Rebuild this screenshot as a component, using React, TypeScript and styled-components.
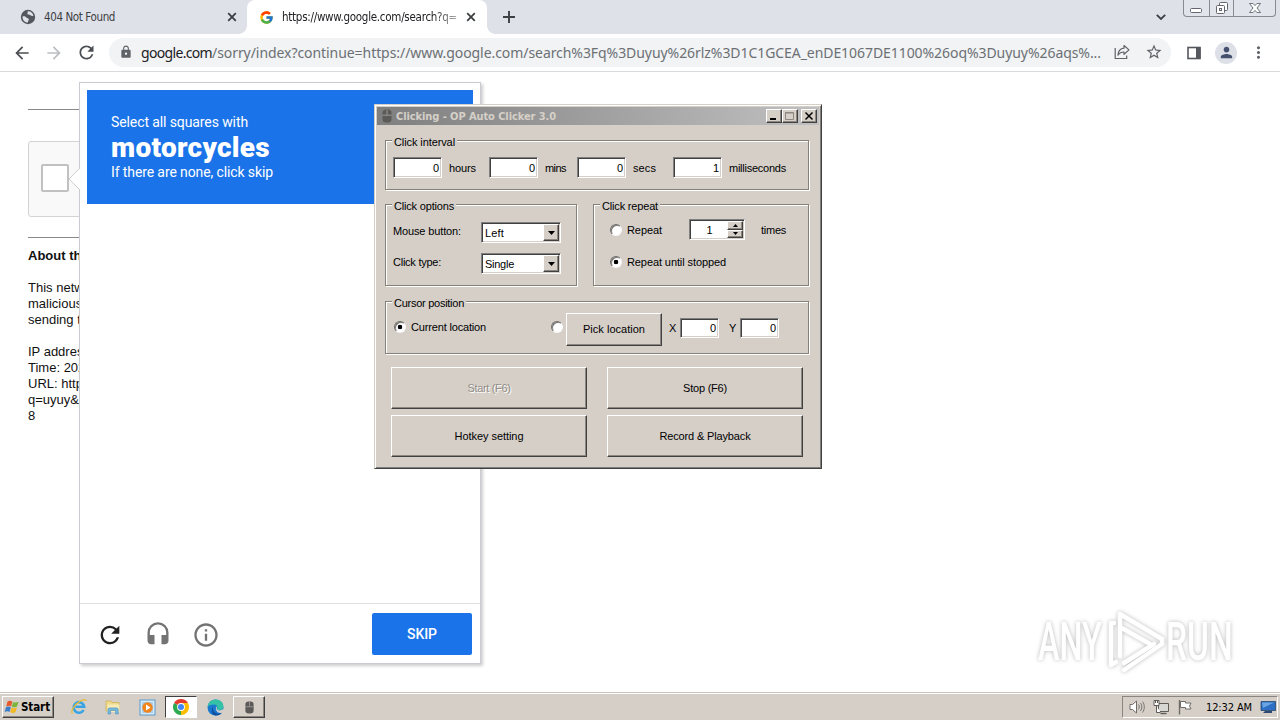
import React, { useLayoutEffect, useRef, useState } from 'react';
import styled, { createGlobalStyle, css } from 'styled-components';
import {
  MdArrowBack,
  MdArrowForward,
  MdHeadset,
  MdInfoOutline,
  MdLock,
  MdMoreVert,
  MdPerson,
  MdRefresh,
  MdStarBorder,
} from 'react-icons/md';
import { FcGoogle } from 'react-icons/fc';

const face = '#d5cfc8';
const tahoma = '"Noto Sans", "Open Sans", sans-serif';
const condensed = '"DejaVu Sans Condensed", "DejaVu Sans", sans-serif';
const sans = '"Liberation Sans", Arial, sans-serif';

const GlobalStyle = createGlobalStyle`
  * {
    box-sizing: border-box;
  }

  body {
    margin: 0;
    overflow: hidden;
    background: #fff;
    font-family: ${sans};
  }
`;

const Desktop = styled.div`
  position: relative;
  display: flex;
  flex-direction: column;
  width: 1280px;
  height: 720px;
  overflow: hidden;
`;

const FitText = styled.span`
  display: inline-block;
  flex: none;
  justify-self: start;
  white-space: nowrap;
`;

// Spreads the letters so that the text takes the given width in any font
const Fit: React.FC<{ width: number; children: string; className?: string }> = ({ width, children, className }) => {
  const ref = useRef<HTMLSpanElement>(null);
  const [spacing, setSpacing] = useState(0);

  useLayoutEffect(() => {
    if (!ref.current) return;
    const natural = ref.current.getBoundingClientRect().width;
    setSpacing((width - natural) / children.length);
  }, [width, children]);

  return (
    <FitText ref={ref} className={className} style={{ letterSpacing: spacing }}>
      {children}
    </FitText>
  );
};

/* ---------- browser ---------- */

const TabStrip = styled.div`
  display: flex;
  height: 34px;
  flex: none;
  background: #dee1e8;
  color: #3c4043;
  font: 11.5px/16px ${condensed};
`;

const Tab = styled.div<{ $active?: boolean }>`
  position: relative;
  display: flex;
  align-items: center;
  width: ${({ $active }) => ($active ? 240 : 247)}px;
  padding: ${({ $active }) => ($active ? '0 11px 0 12px' : '0 10px 0 20px')};
  border-radius: 8px 8px 0 0;
  background: ${({ $active }) => ($active ? '#fff' : 'transparent')};

  ${({ $active }) =>
    $active &&
    css`
      &::before,
      &::after {
        content: '';
        position: absolute;
        bottom: 0;
        width: 8px;
        height: 8px;
      }
      &::before {
        left: -8px;
        background: radial-gradient(circle at 0 0, transparent 7.5px, #fff 8px);
      }
      &::after {
        right: -8px;
        background: radial-gradient(circle at 100% 0, transparent 7.5px, #fff 8px);
      }
    `}
`;

const TabTitle = styled.div<{ $faded?: boolean }>`
  display: flex;
  margin-left: 8px;
  margin-right: auto;
  overflow: hidden;
  ${({ $faded }) =>
    $faded &&
    css`
      color: #202124;
      mask-image: linear-gradient(90deg, #000 86%, rgba(0, 0, 0, 0.35));
    `}
`;

const NewTab = styled.div`
  display: flex;
  align-items: center;
  padding-left: 16px;
`;

const StripEnd = styled.div`
  display: flex;
  margin-left: auto;
`;

const ChevronBox = styled.div`
  display: flex;
  align-items: center;
  margin-right: 16px;
`;

const Caption = styled.div`
  display: flex;
  width: 93px;
  height: 17px;
  margin-right: 4px;
  border: 1px solid #858b95;
  border-top: 0;
  border-radius: 0 0 4px 4px;
  background: #e1e4ea;
`;

const CaptionButton = styled.div<{ $width: number }>`
  display: flex;
  justify-content: center;
  width: ${({ $width }) => $width}px;

  & + & {
    border-left: 1px solid #858b95;
  }
`;

const Toolbar = styled.div`
  display: flex;
  align-items: center;
  height: 38px;
  flex: none;
  padding-left: 6px;
  border-bottom: 1px solid #d8dadd;
  background: #fff;
  color: #5f6368;
`;

const NavIcon = styled.div<{ $dim?: boolean }>`
  display: flex;
  justify-content: center;
  width: 32px;
  color: ${({ $dim }) => ($dim ? '#bcbec1' : '#4b4f53')};
`;

const Omnibox = styled.div`
  display: flex;
  align-items: center;
  width: 1062px;
  height: 29px;
  margin: 0 7px 1px;
  padding-left: 10px;
  border-radius: 15px;
  background: #f1f3f4;
  font: 14px/20px ${tahoma};
`;

const Address = styled.div`
  display: flex;
  width: 965px;
  margin-left: 8px;
  padding-top: 1px;
  color: #6c7074;
`;

const Host = styled(Fit)`
  color: #202124;
`;

const ToolIcon = styled.div`
  display: flex;
  align-items: center;
  justify-content: center;
  width: 32px;
`;

const Avatar = styled.div`
  display: flex;
  align-items: center;
  justify-content: center;
  width: 22px;
  height: 22px;
  border-radius: 50%;
  background: #dde0e6;
  color: #44516f;
`;

/* ---------- page ---------- */

const Page = styled.main`
  position: relative;
  flex: 1;
  padding: 37px 0 0 28px;
  background: #fff;
`;

const Rule = styled.div`
  width: 400px;
  height: 1px;
  background: #8a8a8a;
`;

const CheckCard = styled.div`
  display: flex;
  align-items: center;
  width: 302px;
  height: 76px;
  margin: 31px 0 20px;
  padding: 0 0 2px 12px;
  border: 1px solid #d3d3d3;
  border-radius: 3px;
  background: #f9f9f9;
`;

const CheckSquare = styled.div`
  width: 28px;
  height: 28px;
  border: 2px solid #c1c1c1;
  border-radius: 2px;
  background: #fff;
`;

const Notice = styled.div`
  margin-top: 10px;
  width: 60px;
  color: #111;
  font-size: 13px;
  line-height: 16px;
  white-space: pre;
`;

const Challenge = styled.section`
  position: absolute;
  left: 79px;
  top: 10px;
  display: flex;
  flex-direction: column;
  width: 402px;
  height: 582px;
  border: 1px solid #c9ccd0;
  background: #fff;
  box-shadow: 2px 2px 3px rgba(0, 0, 0, 0.2);
  font-family: Roboto, sans-serif;
`;

const Pointer = styled.svg`
  position: absolute;
  left: -12px;
  top: 84px;
`;

const ChallengeHead = styled.div`
  height: 114px;
  margin: 7px;
  padding: 22px 24px;
  background: #1a73e8;
  color: #fff;
  font-size: 14px;
  line-height: 20px;
`;

const Subject = styled.div`
  height: 30px;
  font-size: 28px;
  font-weight: 900;
  line-height: 32px;
`;

const ChallengeFoot = styled.div`
  display: flex;
  align-items: center;
  height: 60px;
  margin-top: auto;
  padding: 0 8px 0 16px;
  border-top: 1px solid #dfdfdf;
`;

const FootIcon = styled.div<{ $dark?: boolean }>`
  display: flex;
  align-items: center;
  justify-content: center;
  width: 28px;
  height: 32px;
  margin-right: 20px;
  padding-top: 2px;
  color: ${({ $dark }) => ($dark ? '#222' : '#737373')};
`;

const Skip = styled.button`
  width: 100px;
  height: 42px;
  margin-left: auto;
  padding: 0;
  border: 0;
  border-radius: 2px;
  background: #1a73e8;
  color: #fff;
  font: 500 14px Roboto, sans-serif;
`;

const WatermarkLogo = styled.svg`
  position: absolute;
  left: 1030px;
  top: 603px;
  filter: drop-shadow(0 0 2px rgba(0, 0, 0, 0.28));
`;

/* ---------- auto clicker ---------- */

const raised = css`
  border: 1px solid;
  border-color: #fff #404040 #404040 #fff;
  box-shadow: inset -1px -1px 0 #8b8680;
`;

const sunken = css`
  border: 1px solid;
  border-color: #808080 #fff #fff #808080;
  box-shadow: inset 1px 1px 0 #404040, inset -1px -1px 0 ${face};
`;

const Dialog = styled.section`
  position: absolute;
  left: 374px;
  top: 104px;
  width: 448px;
  height: 365px;
  padding: 1px;
  border: 1px solid;
  border-color: ${face} #404040 #404040 ${face};
  box-shadow: inset 1px 1px 0 #fff, inset -1px -1px 0 #808080;
  background: ${face};
  color: #000;
  font: 11px/14px ${sans};
`;

const TitleBar = styled.div`
  display: flex;
  align-items: center;
  height: 18px;
  margin: 1px 1px 0;
  padding: 0 2px 0 4px;
  background: linear-gradient(90deg, #7f7f7f, #c0c0c0);
  color: #d5d0c8;
  font: bold 11px/18px ${condensed};
`;

const TitleText = styled(Fit)`
  margin: 1px auto 0 3px;
`;

const TitleButton = styled.div<{ $gap?: boolean }>`
  display: flex;
  align-items: center;
  justify-content: center;
  width: 16px;
  height: 14px;
  margin-left: ${({ $gap }) => ($gap ? 3 : 0)}px;
  background: ${face};
  ${raised}
`;

const GroupRow = styled.div<{ $top: number }>`
  display: flex;
  justify-content: space-between;
  width: 424px;
  margin: ${({ $top }) => $top}px 0 0 9px;
`;

const Group = styled.div<{ $width: number; $height: number }>`
  width: ${({ $width }) => $width}px;
  height: ${({ $height }) => $height}px;
  border: 1px solid #858078;
  box-shadow: 1px 1px 0 #fff, inset 1px 1px 0 #fff;
`;

const Legend = styled.div`
  width: fit-content;
  height: 14px;
  margin: -6px 0 -1px 6px;
  padding: 0 2px;
  background: ${face};
`;

const IntervalRow = styled.div`
  display: grid;
  grid-template-columns: 56px 40px 56px 32px 56px 40px 56px 60px;
  align-items: center;
  margin: 9px 0 0 7px;
`;

const Field = styled.div<{ $width: number; $height: number }>`
  display: flex;
  align-items: center;
  justify-content: flex-end;
  width: ${({ $width }) => $width}px;
  height: ${({ $height }) => $height}px;
  padding-right: 2px;
  background: #fff;
  ${sunken}
`;

const OptionRow = styled.div`
  display: grid;
  grid-template-columns: 88px 80px;
  height: 21px;
  margin: 10px 0 0 7px;
`;

const OptionLabel = styled(Fit)<{ $low?: boolean }>`
  padding-top: 2px;
`;

const Select = styled.div`
  display: flex;
  align-items: center;
  justify-content: space-between;
  height: 21px;
  padding: 2px 1px 2px 3px;
  background: #fff;
  ${sunken}
`;

const DropButton = styled.div`
  display: flex;
  align-items: center;
  justify-content: center;
  width: 16px;
  height: 17px;
  background: ${face};
  ${raised}
`;

const RepeatRow = styled.div<{ $top: number }>`
  display: flex;
  align-items: center;
  height: 21px;
  margin: ${({ $top }) => $top}px 0 0 16px;
`;

const Radio = styled.div<{ $checked?: boolean }>`
  width: 12px;
  height: 12px;
  flex: none;
  border: 1px solid;
  border-color: #706c68 #f8f8f8 #f8f8f8 #706c68;
  border-radius: 50%;
  background: ${({ $checked }) => ($checked ? 'radial-gradient(circle, #000 2px, #fff 2.6px)' : '#fff')};
  box-shadow: inset 1px 1px 0 #777;
`;

const RadioLabel = styled(Fit)`
  margin-left: 5px;
`;

const Spinner = styled.div`
  display: flex;
  width: 56px;
  height: 21px;
  margin: 0 16px 0 auto;
  background: #fff;
  padding: 1px 1px 1px 0;
  ${sunken}
`;

const SpinnerValue = styled.div`
  flex: 1;
  padding: 2px 0 0 2px;
  text-align: center;
`;

const SpinButtons = styled.div`
  display: grid;
  grid-template-rows: 1fr 1fr;
  width: 16px;
`;

const SpinButton = styled.div`
  display: flex;
  align-items: center;
  justify-content: center;
  background: ${face};
  ${raised}
`;

const TimesLabel = styled(Fit)`
  margin-right: 22px;
`;

const CursorRow = styled.div`
  display: flex;
  align-items: flex-start;
  margin: 4px 0 0 8px;
`;

const CursorCell = styled.div<{ $width: number; $top: number }>`
  display: flex;
  align-items: center;
  flex: none;
  width: ${({ $width }) => $width}px;
  padding-top: ${({ $top }) => $top}px;
`;

const AxisCell = styled.div`
  display: flex;
  align-items: center;
  gap: 2px;
  margin: 5px 0 0 7px;

  & + & {
    margin-left: 10px;
  }
`;

const PushButton = styled.button<{ $disabled?: boolean }>`
  display: flex;
  align-items: center;
  justify-content: center;
  width: 100%;
  height: 100%;
  padding: 0 0 1px;
  background: ${face};
  color: ${({ $disabled }) => ($disabled ? '#928d87' : '#000')};
  text-shadow: ${({ $disabled }) => ($disabled ? '1px 1px 0 #fff' : 'none')};
  font: 11px/14px ${sans};
  ${raised}
`;

const PickCell = styled.div`
  width: 96px;
  height: 33px;
  flex: none;
`;

const Actions = styled.div`
  display: grid;
  grid-template-columns: 196px 196px;
  grid-auto-rows: 42px;
  gap: 6px 20px;
  margin: 13px 0 0 15px;
`;

/* ---------- taskbar ---------- */

const Taskbar = styled.footer`
  display: flex;
  align-items: center;
  height: 28px;
  flex: none;
  padding: 1px 2px 0;
  border-top: 1px solid #c9c5bd;
  box-shadow: inset 0 1px 0 #fff;
  background: ${face};
`;

const StartButton = styled.div`
  display: flex;
  align-items: center;
  gap: 0;
  width: 52px;
  height: 22px;
  margin-right: 9px;
  padding-left: 1px;
  color: #000;
  font: bold 11.5px ${condensed};
  ${raised}
`;

const TaskItem = styled.div<{ $state?: 'pressed' | 'raised' }>`
  display: flex;
  align-items: center;
  justify-content: center;
  width: 32px;
  height: 22px;
  margin-right: 2px;
  ${({ $state }) => $state === 'raised' && raised}
  ${({ $state }) =>
    $state === 'pressed' &&
    css`
      border: 1px solid;
      border-color: #404040 #fff #fff #404040;
      background: #fff;
    `}
`;

const Tray = styled.div`
  display: flex;
  align-items: center;
  gap: 8px;
  width: 156px;
  height: 22px;
  margin-left: auto;
  padding-left: 6px;
  border: 1px solid;
  border-color: #8a857e #fff #fff #8a857e;
  color: #000;
  font: 11px/14px ${condensed};
`;

const Clock = styled(Fit)`
  margin-left: 5px;
  padding-top: 1px;
`;

/* ---------- icons ---------- */

const Cross = () => (
  <svg width="10" height="10" viewBox="0 0 10 10">
    <path d="M1.2 1.2l7.6 7.6M8.8 1.2L1.2 8.8" stroke="#3c4043" strokeWidth="1.8" />
  </svg>
);

const Globe = () => (
  <svg width="16" height="16" viewBox="0 0 16 16">
    <circle cx="8" cy="8" r="7.2" fill="#54585d" />
    <path d="M2.6 7.4c1.8-.4 3 .2 3.8 1.2.6.8 2.2.4 2.4 1.6.2 1-.8 1.2-1 3.4C4.6 13.4 2.2 10.6 2.6 7.4z" fill="#dee1e8" />
    <path d="M7.6 2.4c2.8-.4 5 1.4 5.8 4-.8 1-2.2.4-3-.2-1-.8-2.4-.2-3-1.2-.4-.8.8-1.4.2-2.6z" fill="#dee1e8" />
  </svg>
);

const MouseGlyph = ({ size = 14 }: { size?: number }) => (
  <svg width={size - 2} height={size} viewBox="0 0 12 14">
    <rect x="1.5" y="0.5" width="9" height="13" rx="3.5" fill="#5c5a58" />
    <path d="M6 1v5M1.5 6.2h9" stroke="#9b9894" />
  </svg>
);

const DropArrow = () => (
  <svg width="7" height="4" viewBox="0 0 7 4">
    <path d="M0 0h7L3.5 4z" fill="#000" />
  </svg>
);

const WindowsFlag = () => (
  <svg width="17" height="16" viewBox="0 0 16 16">
    <path d="M3 2.6c1.7-1.1 3.2-1 4.8-.1L6.6 7.4c-1.5-.9-3-1-4.900 0z" fill="#e5592b" />
    <path d="M8.5 2.9c1.7.9 3.6.8 5.6-.2l-1.5 4.900c-1.600.9-3.200 1-5.200.1z" fill="#7cb53c" />
    <path d="M1.5 8.200c1.600-1 3.100-.9 4.900 0L5 13c-1.500-.9-3-.9-4.900.1z" fill="#3d7ec9" />
    <path d="M7.1 8.600c1.700.8 3.500.8 5.300-.1L11 13.200c-1.700 1-3.300.9-5.200 0z" fill="#f4b824" />
  </svg>
);

const ExplorerE = () => (
  <svg width="18" height="18" viewBox="0 0 18 18" fill="none">
    <path d="M13.6 12a5.3 5.3 0 1 1 .6-3.2H5.4" stroke="#36a3e2" strokeWidth="2.6" />
    <path d="M2.5 15.6C.2 13.2 4.6 6.6 9.4 3.6c3.2-2 6.4-2.6 6.6-.6" stroke="#e6bb3a" strokeWidth="1.3" />
  </svg>
);

const FolderIcon = () => (
  <svg width="18" height="18" viewBox="0 0 18 18">
    <path d="M2 3h5l1 1.5h7V13H2z" fill="#f0d98a" stroke="#cbb25c" strokeWidth=".8" />
    <path d="M3.5 6.5h12V14h-12z" fill="#f8ebb4" />
    <path d="M4 16v-4.5c0-1 .6-1.6 1.6-1.6h7c1 0 1.6.6 1.6 1.6V16h-2.600v-3.500h-5V16z" fill="#75b8dd" stroke="#4b94bd" strokeWidth=".6" />
  </svg>
);

const PlayerIcon = () => (
  <svg width="17" height="17" viewBox="0 0 17 17">
    <rect x="1" y="1" width="15" height="15" fill="#d7e9f6" stroke="#5a9bcb" />
    <rect x="3" y="3" width="11" height="11" fill="#a9cfe9" />
    <circle cx="8.5" cy="8.5" r="5.2" fill="#f0851d" />
    <path d="M7 5.6v5.8l4.6-2.900z" fill="#fff" />
  </svg>
);

const ChromeIcon = () => (
  <svg width="16" height="16" viewBox="0 0 16 16">
    <path d="M8 8L1.07 4A8 8 0 0 1 14.93 4z" fill="#e33b2e" />
    <path d="M8 8V16A8 8 0 0 1 1.07 4z" fill="#2da94f" />
    <path d="M8 8L14.93 4A8 8 0 0 1 8 16z" fill="#fdbd00" />
    <path d="M8 4h6.93L11.5 10z" fill="#fdbd00" />
    <circle cx="8" cy="8" r="3.9" fill="#fff" />
    <circle cx="8" cy="8" r="3" fill="#4285f4" />
  </svg>
);

const EdgeIcon = () => (
  <svg width="17" height="17" viewBox="0 0 17 17">
    <circle cx="8.5" cy="8.5" r="8" fill="#1a78cf" />
    <path d="M.6 8C1 3.6 4.4.6 8.6.6c4.6 0 7.8 3.2 7.8 6.8 0 2.4-1.8 3.8-4 3.8-1.8 0-2.8-.8-2.2-1.800C11 7.600 9.400 5.400 6.600 5.400 3.800 5.400 1.400 6.600.6 8z" fill="#35c1a6" />
    <path d="M6.2 8c-1 3 1.2 6.6 5 6.8 1.6.1 3-.5 3.9-1.2-1.3 2.2-3.8 3.1-6.5 2.900C4.400 15.900 3.600 10.200 6.200 8z" fill="#0d4f9e" />
    <path d="M9.6 7.6c1 1.2-.6 2 .4 3 1.4 1.3 4.2 1 6.4-.6l.6 2.4c-1.4 1.2-3 1.8-5 1.4-2.4-.4-4.2-4.2-2.4-6.2z" fill="#d5cfc8" />
  </svg>
);

const Watermark = () => (
  <WatermarkLogo width="245" height="76" viewBox="0 0 245 76">
    <g fill="#fff" fontFamily="Roboto, sans-serif" fontSize="54" fontWeight="500">
      <text transform="translate(8 57) scale(.6 1)">ANY</text>
      <text transform="translate(136 57) scale(.62 1)">RUN</text>
    </g>
    <g fill="none" stroke="#fff" strokeWidth="4.5" strokeLinejoin="round" strokeLinecap="round">
      <path d="M90 53V11l42 25M90 53V24l30 17" />
      <path d="M84 20h-3v42l5-3" />
      <path d="M94 67l38-26v-5" />
      <path d="M94 60l30-19" />
    </g>
  </WatermarkLogo>
);

const SpeakerIcon = () => (
  <svg width="16" height="16" viewBox="0 0 16 16" fill="none" stroke="#6f6c68">
    <path d="M1 5.5h2.5L7.5 2v12L3.5 10.5H1z" fill="#fff" />
    <path d="M9.5 5.5c1 1.4 1 3.6 0 5M11.5 4c1.8 2.2 1.8 5.8 0 8M13.5 2.500c2.400 3 2.400 8 0 11" strokeWidth=".9" />
  </svg>
);

const NetworkIcon = () => (
  <svg width="16" height="16" viewBox="0 0 16 16" fill="none" stroke="#5f5c58">
    <path d="M5.5 4.5h10v8h-10z" fill="#d9d7d3" />
    <path d="M7.5 14.5h6" strokeWidth="1.4" />
    <path d="M1 1.5h5v5H1zM3.5 6.5v7h4" fill="#fff" />
    <path d="M2.5 1v3M4.5 1v3" />
  </svg>
);

const FlagIcon = () => (
  <svg width="16" height="16" viewBox="0 0 16 16" stroke="#6f6c68">
    <path d="M2.5 1v14.5" strokeWidth="1.4" />
    <path d="M3.5 2.5h5v1.5h5.5l-1.5 3 1.5 3H8.5V8.5h-5z" fill="#fff" />
  </svg>
);

const MonitorIcon = () => (
  <svg width="16" height="14" viewBox="0 0 16 14">
    <path d="M1 1.5h14.5v9H1z" fill="#2c6fc4" stroke="#27476f" strokeWidth=".8" />
    <path d="M2 2.5h12L3 8z" fill="#6ba6e4" />
    <path d="M5 11h7v2H3z" fill="#2e4a72" />
  </svg>
);

const intervals = [
  { value: '0', unit: 'hours', width: 27 },
  { value: '0', unit: 'mins', width: 21 },
  { value: '0', unit: 'secs', width: 23 },
  { value: '1', unit: 'milliseconds', width: 57 },
];

const Browser: React.FC = () => (
  <>
    <TabStrip>
      <Tab>
        <Globe />
        <TabTitle>
          <Fit width={71}>404 Not Found</Fit>
        </TabTitle>
        <Cross />
      </Tab>
      <Tab $active>
        <FcGoogle size={15} />
        <TabTitle $faded>
          <Fit width={175}>https://www.google.com/search?q=</Fit>
        </TabTitle>
        <Cross />
      </Tab>
      <NewTab>
        <svg width="12" height="12" viewBox="0 0 12 12">
          <path d="M6 0v12M0 6h12" stroke="#3c4043" strokeWidth="1.9" />
        </svg>
      </NewTab>
      <StripEnd>
        <ChevronBox>
          <svg width="12" height="8" viewBox="0 0 12 8">
            <path d="M1.8 1.8L6 6l4.2-4.2" fill="none" stroke="#3c4043" strokeWidth="1.8" />
          </svg>
        </ChevronBox>
        <Caption>
          <CaptionButton $width={25}>
            <svg width="14" height="16" viewBox="0 0 14 16">
              <rect x="1.5" y="8.5" width="11" height="4" rx="1" fill="#fff" stroke="#62666e" />
            </svg>
          </CaptionButton>
          <CaptionButton $width={25}>
            <svg width="14" height="16" viewBox="0 0 14 16">
              <rect x="4.5" y="2.5" width="8" height="8" rx="1" fill="#fff" stroke="#62666e" />
              <rect x="1.5" y="5.5" width="8" height="8" rx="1" fill="#fff" stroke="#62666e" />
              <rect x="4.5" y="8.5" width="2" height="2" fill="#fff" stroke="#62666e" />
            </svg>
          </CaptionButton>
          <CaptionButton $width={42}>
            <svg width="14" height="16" viewBox="0 0 14 16">
              <path
                d="M1.5 3.5h3.6L7 5.6l1.9-2.1h3.6L9 8l3.5 4.5H8.9L7 10.4l-1.9 2.1H1.5L5 8z"
                fill="#fff"
                stroke="#62666e"
                strokeWidth="0.9"
              />
            </svg>
          </CaptionButton>
        </Caption>
      </StripEnd>
    </TabStrip>
    <Toolbar>
      <NavIcon>
        <MdArrowBack size={20} />
      </NavIcon>
      <NavIcon $dim>
        <MdArrowForward size={20} />
      </NavIcon>
      <NavIcon>
        <MdRefresh size={21} />
      </NavIcon>
      <Omnibox>
        <MdLock size={14} />
        <Address>
          <Host width={71}>google.com</Host>
          <Fit width={889}>
            /sorry/index?continue=https://www.google.com/search%3Fq%3Duyuy%26rlz%3D1C1GCEA_enDE1067DE1100%26oq%3Duyuy%26aqs%...
          </Fit>
        </Address>
        <ToolIcon>
          <svg width="16" height="16" viewBox="0 0 16 16" fill="none" stroke="#5f6368" strokeWidth="1.2">
            <path d="M1.2 4v10.5h11.5V11.5" />
            <path d="M10 1.5l5 4.4-5 4.4V8C7 8 5.2 9.2 4 11.2c.2-3.8 2.4-6.6 6-7z" strokeLinejoin="round" />
          </svg>
        </ToolIcon>
        <ToolIcon>
          <MdStarBorder size={18} />
        </ToolIcon>
      </Omnibox>
      <ToolIcon>
        <svg width="14" height="14" viewBox="0 0 14 14">
          <rect x="1" y="1.5" width="12" height="11" fill="#fff" stroke="#55585d" strokeWidth="1.6" />
          <rect x="9" y="1.5" width="4.5" height="11" fill="#55585d" />
        </svg>
      </ToolIcon>
      <ToolIcon>
        <Avatar>
          <MdPerson size={17} />
        </Avatar>
      </ToolIcon>
      <ToolIcon>
        <MdMoreVert size={19} />
      </ToolIcon>
    </Toolbar>
  </>
);

const Captcha: React.FC = () => (
  <Challenge>
    <Pointer width="12" height="24" viewBox="0 0 12 24">
      <path d="M12 1L1 12l11 11z" fill="#fff" />
      <path d="M12 1L1 12l11 11" fill="none" stroke="#cfcfcf" />
    </Pointer>
    <ChallengeHead>
      <Fit width={137}>Select all squares with</Fit>
      <Subject>
        <Fit width={159}>motorcycles</Fit>
      </Subject>
      <Fit width={162}>If there are none, click skip</Fit>
    </ChallengeHead>
    <ChallengeFoot>
      <FootIcon $dark>
        <MdRefresh size={32} />
      </FootIcon>
      <FootIcon>
        <MdHeadset size={32} />
      </FootIcon>
      <FootIcon>
        <MdInfoOutline size={32} />
      </FootIcon>
      <Skip>
        <Fit width={30}>SKIP</Fit>
      </Skip>
    </ChallengeFoot>
  </Challenge>
);

const AutoClicker: React.FC = () => (
  <Dialog>
    <TitleBar>
      <MouseGlyph />
      <TitleText width={160}>Clicking - OP Auto Clicker 3.0</TitleText>
      <TitleButton>
        <svg width="10" height="10" viewBox="0 0 10 10">
          <path d="M1 8h6" stroke="#000" strokeWidth="2" />
        </svg>
      </TitleButton>
      <TitleButton>
        <svg width="10" height="10" viewBox="0 0 10 10">
          <path d="M.5 1.5h8v7h-8zM.5 2h8" fill="none" stroke="#8b8680" />
        </svg>
      </TitleButton>
      <TitleButton $gap>
        <svg width="10" height="10" viewBox="0 0 10 10">
          <path d="M1.5 1.5l7 7M8.5 1.5l-7 7" stroke="#000" strokeWidth="1.5" />
        </svg>
      </TitleButton>
    </TitleBar>
    <GroupRow $top={15}>
      <Group $width={424} $height={50}>
        <Legend>
          <Fit width={61}>Click interval</Fit>
        </Legend>
        <IntervalRow>
          {intervals.map(({ value, unit, width }) => (
            <React.Fragment key={unit}>
              <Field $width={49} $height={21}>
                {value}
              </Field>
              <Fit width={width}>{unit}</Fit>
            </React.Fragment>
          ))}
        </IntervalRow>
      </Group>
    </GroupRow>
    <GroupRow $top={14}>
      <Group $width={192} $height={82}>
        <Legend>
          <Fit width={60}>Click options</Fit>
        </Legend>
        <OptionRow>
          <OptionLabel width={68}>Mouse button:</OptionLabel>
          <Select>
            <Fit width={19}>Left</Fit>
            <DropButton>
              <DropArrow />
            </DropButton>
          </Select>
        </OptionRow>
        <OptionRow>
          <OptionLabel width={48}>Click type:</OptionLabel>
          <Select>
            <Fit width={29}>Single</Fit>
            <DropButton>
              <DropArrow />
            </DropButton>
          </Select>
        </OptionRow>
      </Group>
      <Group $width={216} $height={82}>
        <Legend>
          <Fit width={56}>Click repeat</Fit>
        </Legend>
        <RepeatRow $top={7}>
          <Radio />
          <RadioLabel width={35}>Repeat</RadioLabel>
          <Spinner>
            <SpinnerValue>1</SpinnerValue>
            <SpinButtons>
              <SpinButton>
                <svg width="5" height="3" viewBox="0 0 5 3">
                  <path d="M0 3h5L2.5 0z" />
                </svg>
              </SpinButton>
              <SpinButton>
                <svg width="5" height="3" viewBox="0 0 5 3">
                  <path d="M0 0h5L2.5 3z" />
                </svg>
              </SpinButton>
            </SpinButtons>
          </Spinner>
          <TimesLabel width={25}>times</TimesLabel>
        </RepeatRow>
        <RepeatRow $top={11}>
          <Radio $checked />
          <RadioLabel width={99}>Repeat until stopped</RadioLabel>
        </RepeatRow>
      </Group>
    </GroupRow>
    <GroupRow $top={15}>
      <Group $width={424} $height={53}>
        <Legend>
          <Fit width={70}>Cursor position</Fit>
        </Legend>
        <CursorRow>
          <CursorCell $width={157} $top={7}>
            <Radio $checked />
            <RadioLabel width={75}>Current location</RadioLabel>
          </CursorCell>
          <CursorCell $width={15} $top={8}>
            <Radio />
          </CursorCell>
          <PickCell>
            <PushButton>
              <Fit width={62}>Pick location</Fit>
            </PushButton>
          </PickCell>
          <AxisCell>
            <Fit width={9}>X</Fit>
            <Field $width={39} $height={20}>
              0
            </Field>
          </AxisCell>
          <AxisCell>
            <Fit width={9}>Y</Fit>
            <Field $width={39} $height={20}>
              0
            </Field>
          </AxisCell>
        </CursorRow>
      </Group>
    </GroupRow>
    <Actions>
      <PushButton $disabled>
        <Fit width={43}>Start (F6)</Fit>
      </PushButton>
      <PushButton>
        <Fit width={44}>Stop (F6)</Fit>
      </PushButton>
      <PushButton>
        <Fit width={69}>Hotkey setting</Fit>
      </PushButton>
      <PushButton>
        <Fit width={91}>{'Record & Playback'}</Fit>
      </PushButton>
    </Actions>
  </Dialog>
);

const SystemBar: React.FC = () => (
  <Taskbar>
    <StartButton>
      <WindowsFlag />
      <Fit width={29}>Start</Fit>
    </StartButton>
    <TaskItem>
      <ExplorerE />
    </TaskItem>
    <TaskItem>
      <FolderIcon />
    </TaskItem>
    <TaskItem>
      <PlayerIcon />
    </TaskItem>
    <TaskItem $state="pressed">
      <ChromeIcon />
    </TaskItem>
    <TaskItem>
      <EdgeIcon />
    </TaskItem>
    <TaskItem $state="raised">
      <MouseGlyph size={13} />
    </TaskItem>
    <Tray>
      <SpeakerIcon />
      <NetworkIcon />
      <FlagIcon />
      <Clock width={46}>12:32 AM</Clock>
      <MonitorIcon />
    </Tray>
  </Taskbar>
);

const App: React.FC = () => (
  <Desktop>
    <GlobalStyle />
    <Browser />
    <Page>
      <Rule />
      <CheckCard>
        <CheckSquare />
      </CheckCard>
      <Rule />
      <Notice>
        <b>About th</b>
        {'\n\nThis netw\nmalicious\nsending t\n\nIP addres\nTime: 202\nURL: http\nq=uyuy&\n8'}
      </Notice>
      <Captcha />
    </Page>
    <SystemBar />
    <AutoClicker />
    <Watermark />
  </Desktop>
);

export default App;
